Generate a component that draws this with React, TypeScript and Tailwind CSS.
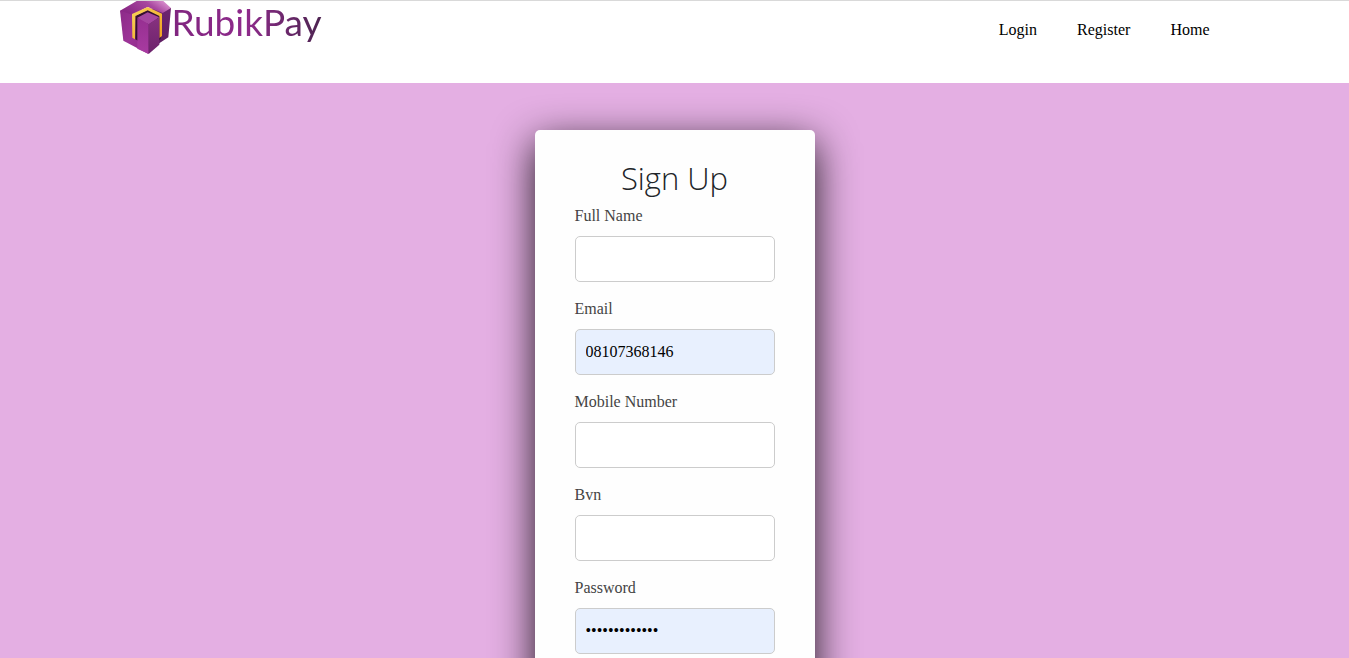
import { useState } from "react";

type FieldProps = {
  id: string;
  label: string;
  type?: string;
  initial?: string;
};

const links = ["Login", "Register", "Home"];

const fields: FieldProps[] = [
  { id: "name", label: "Full Name" },
  { id: "email", label: "Email", initial: "08107368146" },
  { id: "mobile", label: "Mobile Number", type: "tel" },
  { id: "bvn", label: "Bvn" },
  { id: "password", label: "Password", type: "password", initial: "rubikpayuser1" },
];

function CubeMark() {
  return (
    <svg viewBox="30 3 156 159" className="h-[53px] w-[52px] shrink-0" aria-hidden="true">
      <defs>
        <linearGradient id="left" x1="0" y1="0" x2="1" y2="1">
          <stop offset="0" stopColor="#8c2a88" />
          <stop offset="0.5" stopColor="#9c3497" />
          <stop offset="1" stopColor="#8a2785" />
        </linearGradient>
        <linearGradient id="top" x1="0" y1="0.4" x2="1" y2="0">
          <stop offset="0" stopColor="#8a2886" />
          <stop offset="0.55" stopColor="#a8479f" />
          <stop offset="1" stopColor="#eaa9de" />
        </linearGradient>
        <linearGradient id="right" x1="0" y1="0" x2="0" y2="1">
          <stop offset="0" stopColor="#6d2470" />
          <stop offset="1" stopColor="#5a1c5e" />
        </linearGradient>
        <linearGradient id="front" x1="0" y1="0" x2="0" y2="1">
          <stop offset="0" stopColor="#962f91" />
          <stop offset="1" stopColor="#a83ba1" />
        </linearGradient>
        <linearGradient id="side" x1="0" y1="0" x2="0" y2="1">
          <stop offset="0" stopColor="#87317f" />
          <stop offset="1" stopColor="#6c226b" />
        </linearGradient>
        <linearGradient id="gold" x1="0" y1="0" x2="1" y2="1">
          <stop offset="0" stopColor="#f8d65a" />
          <stop offset="1" stopColor="#f0a01f" />
        </linearGradient>
      </defs>
      <path d="M30 32 L114 30 V161 L40 122 Z" fill="url(#left)" />
      <path d="M110 26 L183 24 L175 112 L150 128 L114 161 Z" fill="url(#right)" />
      <path d="M30 32 L80 3 H160 L183 24 L158 39 L113 21 L66 44 Z" fill="url(#top)" />
      <path d="M113 30 L152 46 V116 L146 122 L140 56 L113 42 L84 56 V122 L76 118 V48 Z" fill="#34102f" />
      <path d="M66 42 L113 21 L156 41 V108 L148 114 V48 L113 31 L76 48 L75 118 L67 113 Z" fill="url(#gold)" />
      <path d="M82 53 L113 37 L148 52 L116 73 Z" fill="#a546a0" />
      <path d="M82 53 L116 73 V162 L82 146 Z" fill="url(#front)" />
      <path d="M116 73 L148 52 V134 L116 162 Z" fill="url(#side)" />
    </svg>
  );
}

function Field({ id, label, type = "text", initial = "" }: FieldProps) {
  const [value, setValue] = useState(initial);
  return (
    <div className="mb-4">
      <label htmlFor={id} className="mb-2.5 block text-base leading-[21px] text-[#444444]">
        {label}
      </label>
      <input
        id={id}
        type={type}
        value={value}
        onChange={(event) => setValue(event.target.value)}
        className={`block h-[46px] w-full rounded-[5px] border border-[#cccccc] px-2.5 text-base text-black ${
          initial ? "bg-[#e8f0fe]" : "bg-white"
        }`}
      />
    </div>
  );
}

export default function App() {
  return (
    <div className="flex min-h-screen flex-col bg-[#e4afe3] font-['Liberation_Serif',serif]">
      <header className="border-t border-[#d9d9d9] bg-white">
        <div className="mx-auto flex h-[82px] w-full max-w-[1110px] items-start justify-between">
          <a href="#" className="flex items-start">
            <CubeMark />
            <span className="bg-linear-to-r from-[#80257f] via-[#8e2a8b] to-[#4c2350] bg-clip-text pb-2 font-['Lato',sans-serif] text-[37px] leading-[42px] text-transparent">
              RubikPay
            </span>
          </a>
          <nav className="flex gap-10 px-5 pt-[17px]">
            {links.map((link) => (
              <a key={link} href="#" className="text-base text-black">
                {link}
              </a>
            ))}
          </nav>
        </div>
      </header>
      <main className="flex flex-1 justify-center px-4 pt-[47px] pb-12">
        <form className="w-full max-w-[280px] rounded-[5px] bg-[#fefefe] px-10 pt-[25px] pb-16 shadow-[0_12px_40px_rgba(0,0,0,0.88)]">
          <h1 className="mb-1 text-center font-['Open_Sans',sans-serif] text-[31px] leading-[46px] font-light text-[#212529]">
            Sign Up
          </h1>
          {fields.map((field) => (
            <Field key={field.id} {...field} />
          ))}
        </form>
      </main>
    </div>
  );
}
